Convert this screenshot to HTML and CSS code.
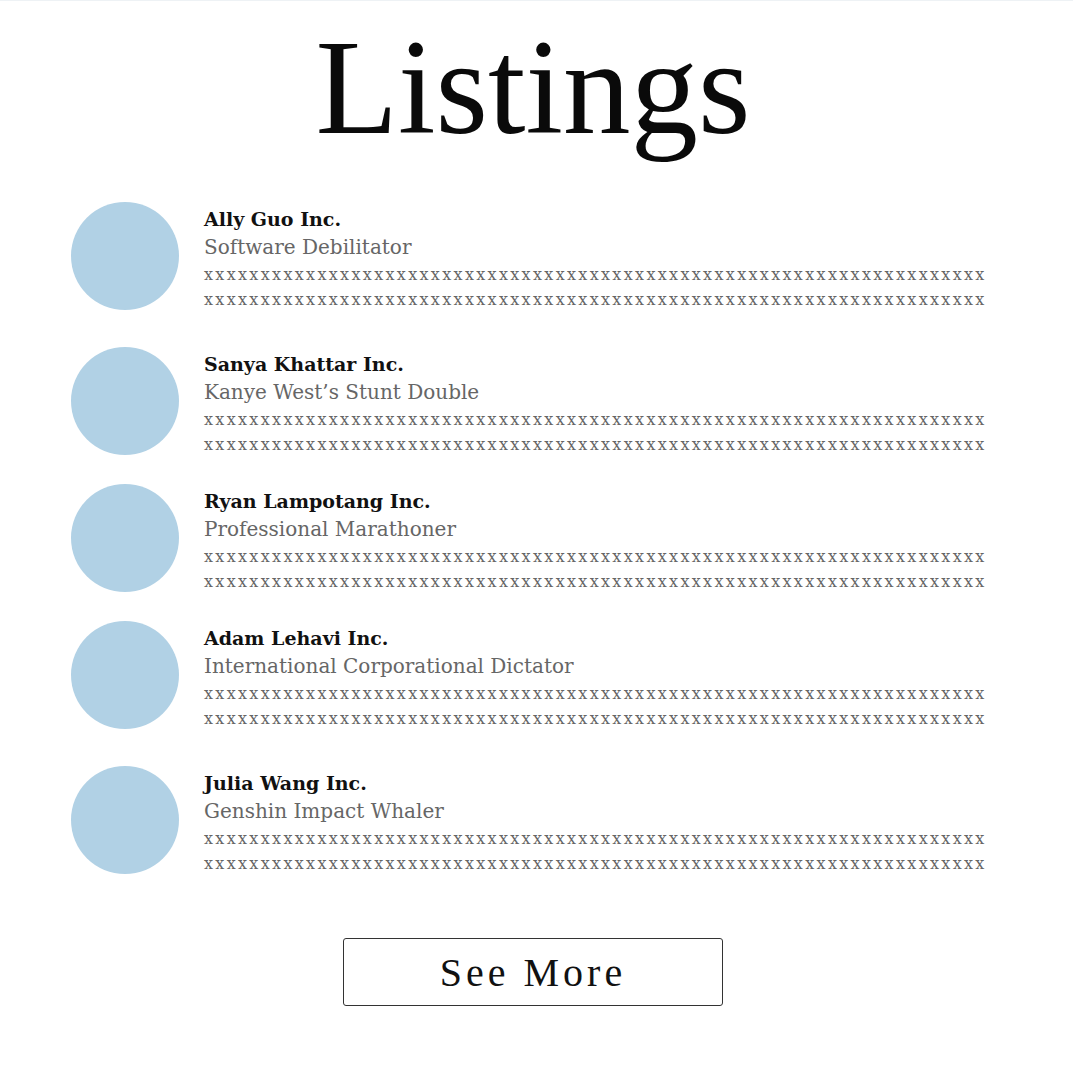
FILE: index.html
```html
<!DOCTYPE html>
<html lang="en">
<head>
<meta charset="utf-8">
<title>Listings</title>
<link rel="stylesheet" href="styles.css">
</head>
<body>
<div class="page">
  <h1 class="title">Listings</h1>
  <ul class="listings">
    <li class="listing">
      <div class="avatar"></div>
      <div class="info">
        <div class="name">Ally Guo Inc.</div>
        <div class="role">Software Debilitator</div>
        <div class="desc">xxxxxxxxxxxxxxxxxxxxxxxxxxxxxxxxxxxxxxxxxxxxxxxxxxxxxxxxxxxxxxxxxxxxx</div>
        <div class="desc">xxxxxxxxxxxxxxxxxxxxxxxxxxxxxxxxxxxxxxxxxxxxxxxxxxxxxxxxxxxxxxxxxxxxx</div>
      </div>
    </li>
    <li class="listing">
      <div class="avatar"></div>
      <div class="info">
        <div class="name">Sanya Khattar Inc.</div>
        <div class="role">Kanye West’s Stunt Double</div>
        <div class="desc">xxxxxxxxxxxxxxxxxxxxxxxxxxxxxxxxxxxxxxxxxxxxxxxxxxxxxxxxxxxxxxxxxxxxx</div>
        <div class="desc">xxxxxxxxxxxxxxxxxxxxxxxxxxxxxxxxxxxxxxxxxxxxxxxxxxxxxxxxxxxxxxxxxxxxx</div>
      </div>
    </li>
    <li class="listing">
      <div class="avatar"></div>
      <div class="info">
        <div class="name">Ryan Lampotang Inc.</div>
        <div class="role">Professional Marathoner</div>
        <div class="desc">xxxxxxxxxxxxxxxxxxxxxxxxxxxxxxxxxxxxxxxxxxxxxxxxxxxxxxxxxxxxxxxxxxxxx</div>
        <div class="desc">xxxxxxxxxxxxxxxxxxxxxxxxxxxxxxxxxxxxxxxxxxxxxxxxxxxxxxxxxxxxxxxxxxxxx</div>
      </div>
    </li>
    <li class="listing">
      <div class="avatar"></div>
      <div class="info">
        <div class="name">Adam Lehavi Inc.</div>
        <div class="role">International Corporational Dictator</div>
        <div class="desc">xxxxxxxxxxxxxxxxxxxxxxxxxxxxxxxxxxxxxxxxxxxxxxxxxxxxxxxxxxxxxxxxxxxxx</div>
        <div class="desc">xxxxxxxxxxxxxxxxxxxxxxxxxxxxxxxxxxxxxxxxxxxxxxxxxxxxxxxxxxxxxxxxxxxxx</div>
      </div>
    </li>
    <li class="listing">
      <div class="avatar"></div>
      <div class="info">
        <div class="name">Julia Wang Inc.</div>
        <div class="role">Genshin Impact Whaler</div>
        <div class="desc">xxxxxxxxxxxxxxxxxxxxxxxxxxxxxxxxxxxxxxxxxxxxxxxxxxxxxxxxxxxxxxxxxxxxx</div>
        <div class="desc">xxxxxxxxxxxxxxxxxxxxxxxxxxxxxxxxxxxxxxxxxxxxxxxxxxxxxxxxxxxxxxxxxxxxx</div>
      </div>
    </li>
  </ul>
  <div class="actions">
    <button class="see-more" type="button">See More</button>
  </div>
</div>
</body>
</html>
```
FILE: styles.css
```css
html, body {
  margin: 0;
  padding: 0;
  background: #ffffff;
}

body {
  border-top: 1px solid #eef2f5;
  font-family: "DejaVu Serif", "Liberation Serif", serif;
  color: #111111;
}

.page {
  padding: 0 7px 0 0;
}

.title {
  margin: 0;
  padding-top: 19px;
  font-family: "Liberation Serif", serif;
  font-weight: normal;
  font-size: 135px;
  line-height: 1;
  text-align: center;
  color: #0a0a0a;
}

.listings {
  list-style: none;
  margin: 47px 0 0 71px;
  padding: 0;
  width: 914px;
}

.listing {
  display: flex;
  align-items: flex-start;
  gap: 25px;
  margin-bottom: 27px;
}

.listing:nth-child(3n+1) {
  margin-bottom: 35px;
}

.listing:last-child {
  margin-bottom: 0;
}

.avatar {
  flex: none;
  width: 108px;
  height: 108px;
  border-radius: 50%;
  background: #b1d1e5;
}

.info {
  padding-top: 3px;
  min-width: 0;
}

.name {
  font-size: 19px;
  font-weight: bold;
  line-height: 28px;
  color: #111111;
}

.role {
  font-size: 20px;
  line-height: 29px;
  color: #666666;
}

.desc {
  font-size: 16px;
  line-height: 25px;
  color: #666666;
  white-space: nowrap;
  letter-spacing: 2.32px;
}

.actions {
  display: flex;
  justify-content: center;
  margin-top: 62px;
}

.see-more {
  width: 380px;
  height: 68px;
  background: #ffffff;
  border: 1px solid #333333;
  border-radius: 3px;
  font-family: "Liberation Serif", serif;
  font-size: 40px;
  letter-spacing: 4px;
  color: #111111;
  cursor: pointer;
}
```
